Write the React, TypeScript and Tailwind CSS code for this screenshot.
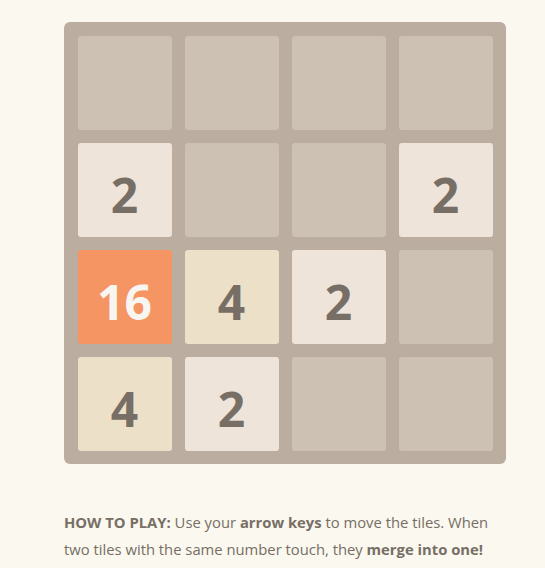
const grid: number[][] = [
  [0, 0, 0, 0],
  [2, 0, 0, 2],
  [16, 4, 2, 0],
  [4, 2, 0, 0],
]

const tileStyles: Record<number, string> = {
  0: 'bg-[#cdc1b4]',
  2: 'bg-[#eee4da] text-[#776e65]',
  4: 'bg-[#ede0c8] text-[#776e65]',
  16: 'bg-[#f59563] text-[#f9f6f2]',
}

function Tile({ value }: { value: number }) {
  return (
    <div
      className={`flex h-[94px] w-[94px] items-center justify-center rounded-[3px] pt-[10px] text-[48px] font-bold leading-none ${tileStyles[value]}`}
    >
      {value > 0 ? value : null}
    </div>
  )
}

export default function App() {
  return (
    <div
      className="min-h-[568px] bg-[#faf8ef] pl-[64px] pt-[22px] text-[#776e65]"
      style={{ fontFamily: '"Open Sans", "Liberation Sans", sans-serif' }}
    >
      {/* Board */}
      <div className="grid w-[442px] grid-cols-4 gap-[13px] rounded-[6px] bg-[#bbada0] p-[13.5px]">
        {grid.flat().map((v, i) => (
          <Tile key={i} value={v} />
        ))}
      </div>

      {/* Instructions */}
      <p className="mt-[45px] w-[440px] text-[14.8px] leading-[27px]">
        <strong>HOW TO PLAY:</strong> Use your <strong>arrow keys</strong> to move the tiles. When two tiles
        with the same number touch, they <strong>merge into one!</strong>
      </p>
    </div>
  )
}
